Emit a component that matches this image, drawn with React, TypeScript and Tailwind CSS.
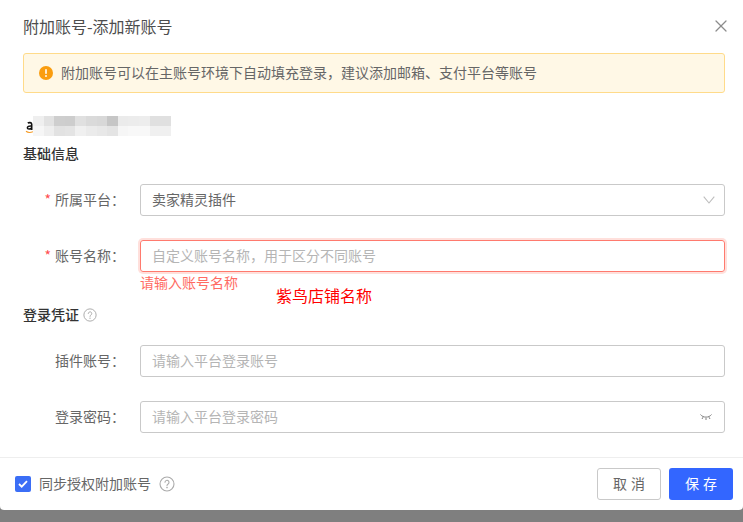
import { useState } from 'react';
import { X } from 'lucide-react';

const mosaicTop = ['#efefef', '#e2e2e2', '#cecece', '#cdcdcd', '#e0e0e0', '#dadada', '#d8d8d8', '#c6c6c6', '#ebebeb', '#ececec', '#ededed', '#e0e0e0', '#e0e0e0'];
const mosaicBottom = ['#f6f6f6', '#eeeeee', '#e2e2e2', '#e4e4e4', '#f0f0f0', '#ebebeb', '#e8e8e8', '#e4e4e4', '#f6f6f6', '#f8f8f8', '#f8f8f8', '#f0f0f0', '#f0f0f0'];

function Help({ size }: { size: number }) {
  return (
    <svg width={size} height={size} viewBox="0 0 16 16" fill="none" className="shrink-0">
      <circle cx="8" cy="8" r="7" stroke="#aaaaaa" strokeWidth="1.100" />
      <path d="M6 6.300a2 2 0 1 1 3.100 1.700c-.7.4-1.100.8-1.100 1.600" stroke="#aaaaaa" strokeWidth="1.100" strokeLinecap="round" />
      <circle cx="8" cy="11.600" r=".8" fill="#aaaaaa" />
    </svg>
  );
}

function Row({ label, required, children }: { label: string; required?: boolean; children: React.ReactNode }) {
  return (
    <div className="flex items-center">
      <div className="w-[117px] shrink-0 pb-[2px] pr-[15px] text-right text-[14px] text-[#666666]">
        {required && <span className="mr-1 text-[#ff4d4f]">*</span>}
        {label}：
      </div>
      <div className="flex-1">{children}</div>
    </div>
  );
}

export default function App() {
  const [sync, setSync] = useState(true);

  return (
    <div className="relative h-[522px] w-[743px] overflow-hidden bg-[#7f7f7f] font-['Noto_Sans_CJK_SC','Noto_Sans',sans-serif]">
      <div className="flex h-[510px] flex-col rounded-b bg-white">
        <div className="flex h-[53px] items-center justify-between pb-[1px] pl-[23px] pr-[12px]">
          <span className="pb-[1px] text-[16px] text-[#4d4d4d]">附加账号-添加新账号</span>
          <X className="h-5 w-5 text-[#8c8c8c]" strokeWidth={1.5} />
        </div>

        <div className="flex-1 pl-[23px] pr-[18px]">
          <div className="flex h-10 items-center gap-2 rounded-[3px] border border-[#ffdb8a] bg-[#fff8e6] pl-[15px] text-[14px] text-[#666666]">
            <svg width="14" height="14" viewBox="0 0 14 14" className="shrink-0">
              <circle cx="7" cy="7" r="7" fill="#fa9d0f" />
              <rect x="6.200" y="3" width="1.600" height="5" rx=".8" fill="#fff" />
              <circle cx="7" cy="10" r=".95" fill="#fff" />
            </svg>
            <span className="pb-[2px]">附加账号可以在主账号环境下自动填充登录，建议添加邮箱、支付平台等账号</span>
          </div>

          <div className="mt-[23px] flex h-5 items-center">
            <svg width="10" height="16" viewBox="0 0 10 16" className="shrink-0">
              <path d="M4.800 5.200c1.200-1 3.900-.8 3.900 1V12M8.700 8c-3-.3-4.400.6-4.300 2 .1 1.300 3 1.400 4.300-.3" stroke="#111111" strokeWidth="1.600" fill="none" />
              <path d="M3 13.300c2 1.500 4 1.600 7 .4" stroke="#f59a23" strokeWidth="1.100" fill="none" />
            </svg>
            <div className="flex flex-col">
              <div className="flex">
                {mosaicTop.map((c, i) => (
                  <div key={i} className="h-2.5 w-[10.6px]" style={{ backgroundColor: c }} />
                ))}
              </div>
              <div className="flex">
                {mosaicBottom.map((c, i) => (
                  <div key={i} className="h-2.5 w-[10.6px]" style={{ backgroundColor: c }} />
                ))}
              </div>
            </div>
          </div>

          <div className="mt-[7px] text-[14px] leading-5 font-medium text-[#333333]">基础信息</div>

          <div className="mt-[21px]">
            <Row label="所属平台" required>
              <div className="flex h-8 items-center justify-between rounded-[3px] border border-[#c9c9c9] pl-[11px] pr-[9px] text-[14px] text-[#666666]">
                <span className="pb-[2px]">卖家精灵插件</span>
                <svg width="12" height="8" viewBox="0 0 12 8" fill="none" stroke="#bdbdbd" strokeWidth="1.100">
                  <path d="M.7.700 6 7 11.300.700" />
                </svg>
              </div>
            </Row>
          </div>

          <div className="mt-6">
            <Row label="账号名称" required>
              <div className="flex h-8 items-center rounded-[3px] border border-[#ff7a6e] pl-[11px] text-[14px] text-[#b5b5b5] shadow-[0_0_0_2px_#ffe0dc]">
                <span className="pb-[2px]">自定义账号名称，用于区分不同账号</span>
              </div>
            </Row>
          </div>
          <div className="ml-[117px] text-[14px] leading-5 text-[#ff6b63]">请输入账号名称</div>

          <div className="mt-[13px] flex h-5 items-center gap-1 text-[14px] font-medium text-[#333333]">
            <span className="pb-[2px]">登录凭证</span>
            <Help size={14} />
          </div>

          <div className="mt-5">
            <Row label="插件账号">
              <div className="flex h-8 items-center rounded-[3px] border border-[#c9c9c9] pl-[11px] text-[14px] text-[#b5b5b5]">
                <span className="pb-[2px]">请输入平台登录账号</span>
              </div>
            </Row>
          </div>

          <div className="mt-6">
            <Row label="登录密码">
              <div className="flex h-8 items-center justify-between rounded-[3px] border border-[#c9c9c9] pl-[11px] pr-[12px] text-[14px] text-[#b5b5b5]">
                <span className="pb-[2px]">请输入平台登录密码</span>
                <svg width="12" height="8" viewBox="0 0 12 8" fill="none" stroke="#808080" strokeWidth="1">
                  <path d="M.5 1.500C3 5 9 5 11.500 1.500M3 4.200 2 6M6 5v2M9 4.200 10 6" />
                </svg>
              </div>
            </Row>
          </div>
        </div>

        <div className="flex h-[53px] items-center justify-between border-t border-[#eeeeee] pl-[15px] pr-[10px]">
          <div className="flex items-center text-[14px] text-[#666666]">
            <button onClick={() => setSync(!sync)} className="mr-2 flex h-4 w-4 items-center justify-center rounded-[2px] bg-[#3b6ef6]">
              {sync && (
                <svg width="10" height="8" viewBox="0 0 10 8" fill="none" stroke="#fff" strokeWidth="1.800">
                  <path d="M1 4l2.700 2.700L9 1.200" />
                </svg>
              )}
            </button>
            <span className="mr-2 pb-[2px]">同步授权附加账号</span>
            <Help size={16} />
          </div>
          <div className="flex gap-2">
            <button className="h-8 w-16 rounded-[3px] border border-[#c9c9c9] bg-white pb-[2px] pl-[4px] text-[14px] tracking-[4px] text-[#666666]">取消</button>
            <button className="h-8 w-16 rounded-[3px] bg-[#3366ff] pb-[2px] pl-[4px] text-[14px] tracking-[4px] text-white">保存</button>
          </div>
        </div>
      </div>

      <div className="absolute left-[276px] top-[284px] text-[16px] leading-[22px] text-[#ff0000]">紫鸟店铺名称</div>
    </div>
  );
}
